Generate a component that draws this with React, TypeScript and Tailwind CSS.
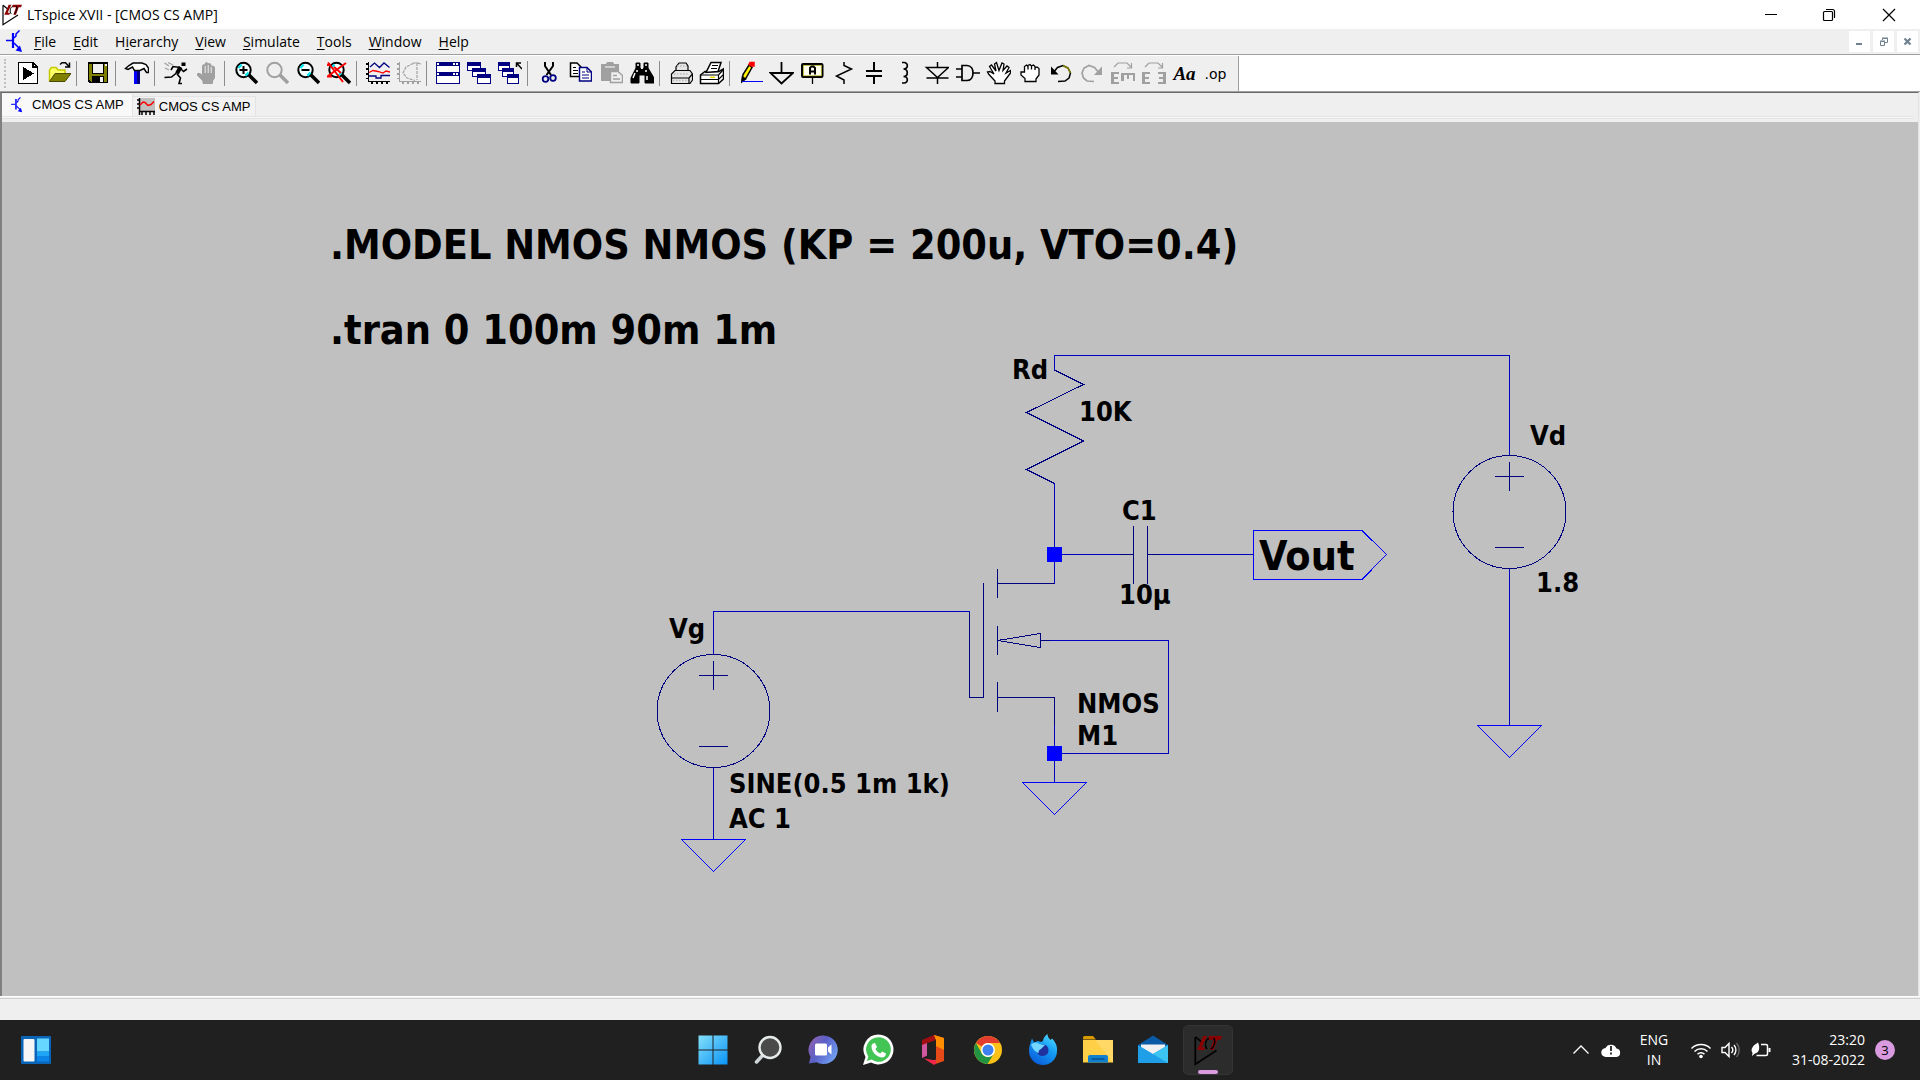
import type { ReactNode } from "react";

const INK = "#000000";
const NAVY = "#000080";
const WIRE = "#0000c0";
const FLAG = "#0000ff";
const OFF = "#a0a0a0";

function Glyph({ children, smooth }: { children: ReactNode; smooth?: boolean }) {
  return (
    <svg
      viewBox="0 0 25 25"
      className="h-[25px] w-[25px]"
      fill="none"
      stroke={INK}
      strokeWidth="1.5"
      shapeRendering={smooth ? "auto" : "crispEdges"}
      aria-hidden="true"
    >
      {children}
    </svg>
  );
}

function Lens({ color = INK, children }: { color?: string; children?: ReactNode }) {
  return (
    <Glyph smooth>
      <circle cx="10.5" cy="9" r="7.2" fill={color === INK ? "#f4ffff" : "none"} stroke={color} strokeWidth="2" />
      {color === INK && <path d="M5.5 7l3-3.4M12.5 14.6l3-3" stroke="#00e5ee" strokeWidth="2.2" />}
      <path d="M16 14l8 8" stroke={color} strokeWidth="3.6" />
      {children}
    </Glyph>
  );
}

function Win({ x, y, w = 14, h = 9 }: { x: number; y: number; w?: number; h?: number }) {
  return (
    <>
      <rect x={x} y={y} width={w} height={h} fill={NAVY} stroke="none" />
      <rect x={x + 1} y={y + 4} width={w - 2} height={h - 5} fill="#fff" stroke="none" />
    </>
  );
}

const HAND =
  "M9 22.5V20L3.500 14.5V12.5H6L8.500 14.5V4.5L9.500 3.5L11 4.5V10V2.5L12.5 1.5L14 2.5V10V3L15.5 2.5L17 3.5V10.5V6L18.500 5L20.500 6V17L18.500 20V22.5Z";

const tools: ({ name: string; icon: ReactNode } | null)[] = [
  {
    name: "Run",
    icon: (
      <Glyph>
        <path d="M3.5 1.5H18L22.5 6V22.5H3.5Z" fill="#fff" />
        <path d="M18 1.500V6H22.500" />
        <path d="M8 6L19 12.500L8 19Z" fill={INK} stroke="none" />
      </Glyph>
    ),
  },
  {
    name: "Open",
    icon: (
      <Glyph smooth>
        <path d="M3.500 20.500V9L5.500 6.500H10L12 9H19V13.500" fill="#ffff66" stroke="#c8c800" />
        <path d="M3.500 20.500L9 12.500H25L19 20.500Z" fill="#808000" stroke="#4a4a00" strokeWidth="1" />
        <path d="M14 3.500L16 1.800H19.500L23 5.500M23.500 1.500V6H19" />
      </Glyph>
    ),
  },
  null,
  {
    name: "Save",
    icon: (
      <Glyph>
        <path d="M3.500 2H22.500V21.500H5.500L3.500 19.500Z" fill="#808000" />
        <rect x="7" y="2" width="11.500" height="10" fill="#efefef" stroke={INK} strokeWidth="1" />
        <rect x="7" y="14.500" width="12" height="7" fill={INK} stroke="none" />
        <rect x="15" y="16" width="3" height="5" fill="#efefef" stroke="none" />
        <rect x="19.500" y="3" width="2" height="2" fill="#efefef" stroke="none" />
      </Glyph>
    ),
  },
  null,
  {
    name: "Control panel",
    icon: (
      <Glyph smooth>
        <rect x="10" y="9" width="6" height="14" fill="#0000ff" stroke="none" />
        <path d="M14.500 9V23" stroke={NAVY} strokeWidth="3" />
        <path d="M1.500 7.500L5 4.500L9 2H18L22 3.500L24.500 7V11.500H22.500L20 7.500L16 9.500H10.500L8.500 6L4 8.500Z" fill="#fff" />
      </Glyph>
    ),
  },
  null,
  {
    name: "Simulate",
    icon: (
      <Glyph smooth>
        <path d="M18.500 1.500H22.500V5H18.500Z" fill={INK} stroke="none" />
        <path d="M17.500 6L14 12.500" strokeWidth="4" />
        <path d="M17 6.500L10 5.500L8 9M18 8L20.500 10.500L24 8M13.500 12L8.500 16L1.500 16.500M14 13L17.500 17L16 22.500H19" strokeWidth="1.600" />
        <path d="M1.500 2L6 5M5 1.500L10 4M2 7L6 9" stroke={OFF} strokeWidth="1.300" />
      </Glyph>
    ),
  },
  {
    name: "Halt",
    icon: (
      <Glyph smooth>
        <path d={HAND} fill={OFF} stroke={OFF} strokeWidth="1" />
        <path d="M11.200 5V12M14.200 4V12M17.200 6V12" stroke="#efefef" strokeWidth="1" />
      </Glyph>
    ),
  },
  null,
  {
    name: "Zoom in",
    icon: (
      <Lens>
        <path d="M6.500 9H14.500M10.500 5V13" strokeWidth="2" />
      </Lens>
    ),
  },
  { name: "Pan", icon: <Lens color={OFF} /> },
  {
    name: "Zoom out",
    icon: (
      <Lens>
        <path d="M6.500 9H14.500" strokeWidth="2" />
      </Lens>
    ),
  },
  {
    name: "Zoom full extents",
    icon: (
      <Lens>
        <path d="M2 1.500L17 21M20 2L2 15M1 4H5M1 15.500H6M8 6L15 12" stroke="#f00" strokeWidth="2" />
      </Lens>
    ),
  },
  null,
  {
    name: "Autorange",
    icon: (
      <Glyph>
        <path d="M3.500 1V20.500H25M1 3H3M1 8H3M1 13H3M1 17.500H3M7 21V23M12 21V23M17 21V23M22 21V23" />
        <g shapeRendering="auto" strokeWidth="1.300">
          <path d="M5 6L9.500 2L14.500 6.500L19 2L24.500 6.500" stroke={NAVY} />
          <path d="M4 11.500L8 9.500L13 10.500L18 12L21 10L25 11" stroke="#f00" />
          <path d="M4 15H11V17H16V14.500H25" stroke={NAVY} />
        </g>
      </Glyph>
    ),
  },
  {
    name: "FFT",
    icon: (
      <Glyph>
        <path d="M3.500 1V20.500H25M1 3H3M1 8H3M1 13H3M1 17.500H3M7 21V23M12 21V23M17 21V23M22 21V23" stroke={OFF} />
        <path d="M25 3L21 2H18L10 6L7 12L11 17L19 19.500M21 2V19M17 2H23" stroke={OFF} strokeWidth="1.200" strokeDasharray="3 1" shapeRendering="auto" />
      </Glyph>
    ),
  },
  null,
  {
    name: "Tile windows",
    icon: (
      <Glyph>
        <rect x="1" y="1" width="24" height="22" fill={NAVY} stroke="none" />
        <rect x="2" y="5" width="22" height="6" fill="#fff" stroke="none" />
        <rect x="2" y="15" width="22" height="7" fill="#fff" stroke="none" />
        <path d="M18 3H20M21 3H23M18 13H20M21 13H23M2 3H4M2 13H4" stroke="#fff" />
      </Glyph>
    ),
  },
  {
    name: "Cascade windows",
    icon: (
      <Glyph>
        <Win x={1} y={1} />
        <Win x={6} y={7} />
        <Win x={11} y={13} h={10} />
      </Glyph>
    ),
  },
  {
    name: "Close windows",
    icon: (
      <Glyph>
        <Win x={1} y={1} w={12} />
        <Win x={5} y={7} w={12} />
        <Win x={10} y={13} w={12} h={10} />
        <path d="M19.500 6V2H24M20 2.500L25 8" shapeRendering="auto" />
      </Glyph>
    ),
  },
  null,
  {
    name: "Cut",
    icon: (
      <Glyph smooth>
        <path d="M9 1V5L15 14M17 1V5L10.500 14" strokeWidth="2" />
        <circle cx="9.500" cy="18" r="2.800" stroke={NAVY} strokeWidth="1.800" />
        <circle cx="17" cy="17" r="2.800" stroke={NAVY} strokeWidth="1.800" />
      </Glyph>
    ),
  },
  {
    name: "Copy",
    icon: (
      <Glyph smooth>
        <path d="M3.500 2H10L14 6V15.500H3.500Z" fill="#fff" />
        <path d="M6 6.500H9M6 9.500H11M6 12.500H11" strokeWidth="1" />
        <path d="M12.500 6.500H20L24.500 11V20H12.500Z" fill="#fff" stroke={NAVY} />
        <path d="M20 6.500V11H24.500M15 11H18M15 14H22M15 17H22" stroke={NAVY} strokeWidth="1" />
      </Glyph>
    ),
  },
  {
    name: "Paste",
    icon: (
      <Glyph smooth>
        <path d="M3 3H8L9 1H15L16 3H21V20H3Z" fill={OFF} stroke="none" />
        <path d="M7 6H17" stroke="#efefef" strokeWidth="1.200" />
        <path d="M12.500 10.500H20L24.500 14.500V21.500H12.500Z" fill="#efefef" stroke={OFF} />
        <path d="M15 14.500H19M15 18H22" stroke={OFF} />
      </Glyph>
    ),
  },
  {
    name: "Find",
    icon: (
      <Glyph smooth>
        <path d="M7 2H11V7L13 9L15 7V2H19V7L25 17V22H16V14H10V22H2V17L7 7Z" fill={INK} stroke={INK} strokeWidth="1" />
        <path d="M8 4H10M16 4H18M6 12L4 17M8 9V11M17 9V11M18 15V19" stroke="#fff" />
      </Glyph>
    ),
  },
  null,
  {
    name: "Print",
    icon: (
      <Glyph smooth>
        <path d="M3.500 22V13L7 9.500H8V6L11 2H18L20 5V9.500H22L24.500 13V19L22 22.500H3.500Z" fill="#e6e6e6" strokeWidth="1.200" />
        <path d="M8 9.500H21M3.500 17H21L24.500 13M21 17V22" strokeWidth="1.200" />
        <path d="M9 5H19M6 13H21M5 19.500H20" stroke="#bbb" strokeDasharray="1.500 1.500" />
      </Glyph>
    ),
  },
  {
    name: "Print setup",
    icon: (
      <Glyph smooth>
        <path d="M1.500 14L6 10.500H20L24.500 8V18L19.500 22.500H1.500Z" fill="#fff" />
        <path d="M7 11.500L12 1.500H22L19 10.500Z" fill="#fff" />
        <path d="M13 4.500H19M12 7.500H18M1.500 14H19.500L24 9M19.500 14V22.500M1.500 18.500H19.500L24 14" strokeWidth="1.200" />
        <path d="M11 16.300H16" stroke="#e8d800" />
      </Glyph>
    ),
  },
  null,
  {
    name: "Wire",
    icon: (
      <Glyph smooth>
        <path d="M4 20.500L5 13.500L11 4L14 6.500L8 17Z" fill="#ffef00" strokeWidth="1.500" />
        <path d="M4 20.500L4.500 16L7.500 18Z" fill={INK} />
        <path d="M12 1.500H16V5H13.500L11 3.500Z" fill="#f00" stroke="#f00" />
        <path d="M4 20.500H25" stroke="#0000ff" strokeWidth="1" />
      </Glyph>
    ),
  },
  {
    name: "Ground",
    icon: (
      <Glyph smooth>
        <path d="M12.500 1V12M1.500 12H24L12.500 22.500Z" strokeWidth="1.800" />
      </Glyph>
    ),
  },
  {
    name: "Label net",
    icon: (
      <Glyph smooth>
        <rect x="2" y="3" width="20.500" height="13" rx="1" strokeWidth="2" />
        <rect x="3.300" y="4.300" width="18" height="10.500" fill="#fffff0" stroke="#a0a000" strokeWidth="0.700" />
        <path d="M10 13.500V7L11.500 5.500H13.500L15 7V13.500M10 10.500H15" strokeWidth="2" />
        <path d="M12.500 17V23" strokeWidth="1.300" />
      </Glyph>
    ),
  },
  {
    name: "Resistor",
    icon: (
      <Glyph smooth>
        <path d="M13 1V4.500L20.500 8L5.500 15L13 19V23" />
      </Glyph>
    ),
  },
  {
    name: "Capacitor",
    icon: (
      <Glyph>
        <path d="M12 1V10M12 15V23" strokeWidth="2" />
        <path d="M4 10H20M4 15H20" strokeWidth="2" />
      </Glyph>
    ),
  },
  {
    name: "Inductor",
    icon: (
      <Glyph smooth>
        <path d="M9 1.500H11C15.500 1.500 15.500 8 10.500 8C15.500 8 15.500 15.500 10.500 15.500C15.500 15.500 15.500 22 11 22H9" strokeWidth="1.700" />
      </Glyph>
    ),
  },
  {
    name: "Diode",
    icon: (
      <Glyph smooth>
        <path d="M13.500 1V7M13.500 16.500V23M2.500 6.500H24.500L13.500 16.500ZM2.500 17H24.500" />
      </Glyph>
    ),
  },
  {
    name: "Component",
    icon: (
      <Glyph smooth>
        <path d="M7 4.500H12C20 4.500 20 19.500 12 19.500H7ZM1 8H7M1 16H7M18 12H25" strokeWidth="1.700" />
      </Glyph>
    ),
  },
  {
    name: "Move",
    icon: (
      <Glyph smooth>
        <path
          d="M9 22.500V20L3 13.500L1.500 11L4 10.500L8 13L3.500 5.500L5.500 4L10 10L8.500 3L10.500 1.500L13 9.500L16 2L18 3L17 9.500L21 5L23 6.500L20 12L24.500 9.500V12L18.500 20V22.500Z"
          fill="#fff"
          strokeWidth="1.300"
        />
      </Glyph>
    ),
  },
  {
    name: "Drag",
    icon: (
      <Glyph smooth>
        <path
          d="M8 20.500V17.500L4 14V11H7.500V5.500L9.500 4L11 5.500V8.500V4.500L13 3.500L14.500 5V8.500V5L16.500 4L18 5.500V9V7L20 6L22 7.500V14L19 18V20.500Z"
          fill="#fff"
          strokeWidth="1.300"
        />
      </Glyph>
    ),
  },
  {
    name: "Undo",
    icon: (
      <Glyph smooth>
        <path d="M4.500 12.500L9.500 6.500L15 4.500L20 7L22.500 12L21 17L17 20L10 20.500" strokeWidth="1.500" />
        <path d="M15 4.500L20 7L22.500 12" stroke="#808000" strokeWidth="1.500" />
        <path d="M3 5.500V13.500H10.500Z" fill={INK} stroke="none" />
      </Glyph>
    ),
  },
  {
    name: "Redo",
    icon: (
      <Glyph smooth>
        <path d="M20.500 12.500L15.500 6.500L10 4.500L5 7L3 12L4.500 17L8 20L15 20.500" stroke={OFF} strokeWidth="1.700" />
        <path d="M23 5.500V14H15Z" fill={OFF} stroke="none" />
      </Glyph>
    ),
  },
  {
    name: "Rotate",
    icon: (
      <Glyph>
        <path d="M4 6L8 2H17L21 6M21.500 2V7H17" stroke={OFF} strokeWidth="1.200" shapeRendering="auto" />
        <path d="M2.500 11V22.500M2 12H9M2 17H8M2 22H9M11 13H25M12.500 13V20M18 13V18M24 13V20" stroke={OFF} strokeWidth="2.400" />
      </Glyph>
    ),
  },
  {
    name: "Mirror",
    icon: (
      <Glyph>
        <path d="M4 6L8 2H17L21 6M21.500 2V7H17" stroke={OFF} strokeWidth="1.200" shapeRendering="auto" />
        <path d="M2.500 11V22.500M2 12H9M2 17H8M2 22H9M23.500 11V22.500M24 12H17M24 17H18M24 22H17" stroke={OFF} strokeWidth="2.400" />
      </Glyph>
    ),
  },
  { name: "Text", icon: <span className="font-['Liberation_Serif',serif] text-[19px] leading-6 font-bold italic">Aa</span> },
  { name: "SPICE directive", icon: <span className="font-['DejaVu_Sans',sans-serif] text-[14px] leading-6">.op</span> },
];

const menus: [string, string, string][] = [
  ["", "F", "ile"],
  ["", "E", "dit"],
  ["H", "i", "erarchy"],
  ["", "V", "iew"],
  ["", "S", "imulate"],
  ["", "T", "ools"],
  ["", "W", "indow"],
  ["", "H", "elp"],
];

const labels: [string, number, number][] = [
  ["Rd", 1012, 379],
  ["10K", 1079, 421],
  ["C1", 1122, 520],
  ["10µ", 1119, 604],
  ["Vd", 1530, 445],
  ["1.8", 1536, 592],
  ["NMOS", 1077, 713],
  ["M1", 1077, 745],
  ["Vg", 669, 638],
  ["SINE(0.5 1m 1k)", 729, 793],
  ["AC 1", 729, 828],
];

function Logo({ className }: { className: string }) {
  return (
    <svg viewBox="0 0 30 33" className={className} aria-hidden="true">
      <path d="M1.500 2V31L24 16.500" fill="none" stroke={INK} strokeWidth="1.800" />
      <path d="M1.500 2L9 8" fill="none" stroke={INK} strokeWidth="1.800" />
      <path d="M10 1H14L8.500 13H12L11 16H3.500ZM16 1H30L28.500 5H25L21 16H17L21 5H15Z" fill="#8b0000" />
      <path d="M16 3.500C12 5 11 12 14 15M21 3C24 7 21 13 18 15" fill="none" stroke={INK} strokeWidth="1.500" />
    </svg>
  );
}

function Transistor({ className }: { className: string }) {
  return (
    <svg viewBox="0 0 17 23" className={className} fill="none" stroke="#0000ff" aria-hidden="true">
      <path d="M0 10.500H6" strokeWidth="1.500" />
      <path d="M7 3V18" strokeWidth="2.200" />
      <path d="M8 8L10 6V4L13.500 0.500M8 13L13 18" strokeWidth="1.500" />
      <path d="M16 22L9.500 20.500L14 15.500Z" fill="#0000ff" stroke="none" />
    </svg>
  );
}

function Source({ cx, cy }: { cx: number; cy: number }) {
  return (
    <g stroke={NAVY}>
      <circle cx={cx} cy={cy} r="56.500" />
      <path d={`M${cx - 15} ${cy - 35.500}h29M${cx} ${cy - 50}v29M${cx - 15} ${cy + 35.500}h29`} />
    </g>
  );
}

function Schematic() {
  return (
    <svg viewBox="2 122 1916 874" className="block h-full w-full" fill="none" strokeWidth="1" shapeRendering="crispEdges" role="img" aria-label="CMOS CS AMP schematic">
      <g stroke={WIRE}>
        <path d="M1054.500 370V355.500H1509.500V455M1509.500 568V725M1054.500 483V583M1062 554.500H1120M1160 554.500H1253" />
        <path d="M713.500 654V611.500H969.500M1050 640.500H1168.500V753.500H1054.500M1054.500 725V782M713.500 767V839" />
      </g>
      <g stroke={NAVY}>
        <path d="M1054.500 370L1083.500 384.500L1026.500 412.500L1083.500 441L1026.500 469.500L1054.500 483.500" />
        <path d="M1120 554.500H1133.500M1133.500 526V584M1147.500 526V584M1147.500 554.500H1160" />
        <path d="M1054.500 583.500H997.500M997.500 569V598M997.500 626V655M997.500 682V712M997.500 697.500H1054.500V725" />
        <path d="M983.500 583V697.500H969.500V611.500M997.500 640.500L1040.500 633.500V647.500ZM1040.500 640.500H1050" />
      </g>
      <g stroke={FLAG}>
        <path d="M1253.500 530.500H1362L1386.500 554.500L1362 579.500H1253.500Z" />
        <path d="M1022.500 782.500H1086.500L1054.500 814.500ZM1477.500 725.500H1541.500L1509.500 757.500ZM681.500 839.500H745.500L713.500 871.500Z" />
      </g>
      <Source cx={1509.5} cy={512} />
      <Source cx={713.5} cy={711} />
      <path d="M1047 547h15v15h-15zM1047 746h15v15h-15z" fill={FLAG} />
      <g fill={INK} className="font-['DejaVu_Sans_Condensed','Noto_Sans',sans-serif] font-bold">
        <g className="text-[41px]">
          <text x="330" y="259">.MODEL NMOS NMOS (KP = 200u, VTO=0.4)</text>
          <text x="330" y="344">.tran 0 100m 90m 1m</text>
          <text x="1259" y="570">Vout</text>
        </g>
        <g className="text-[27px]">
          {labels.map(([text, x, y]) => (
            <text key={text} x={x} y={y}>
              {text}
            </text>
          ))}
        </g>
      </g>
    </svg>
  );
}

const taskIcons: { name: string; art: ReactNode }[] = [
  {
    name: "Start",
    art: (
      <>
        <linearGradient id="win" x1="0" y1="0" x2="1" y2="1">
          <stop stopColor="#84e0fb" />
          <stop offset="1" stopColor="#0a93f5" />
        </linearGradient>
        <path d="M1.500 1.500h14v14h-14zM16.500 1.500h14v14h-14zM1.500 16.500h14v14h-14zM16.500 16.500h14v14h-14z" fill="url(#win)" />
      </>
    ),
  },
  {
    name: "Search",
    art: (
      <>
        <path d="M11 21L4.500 28" stroke="#cfd6d8" strokeWidth="3.500" strokeLinecap="round" />
        <circle cx="18" cy="13.500" r="10.500" fill="#4a4a4a" stroke="#e6eaeb" strokeWidth="2.400" />
      </>
    ),
  },
  {
    name: "Chat",
    art: (
      <>
        <linearGradient id="chat" x1="0" y1="0" x2="1" y2="0.600">
          <stop stopColor="#9a63a8" />
          <stop offset="0.500" stopColor="#5b5fc7" />
          <stop offset="1" stopColor="#6f9df0" />
        </linearGradient>
        <path d="M16.500 1.500a14.300 14.300 0 1 1-7 26.800L2 29.500l1.500-6.500A14.300 14.300 0 0 1 16.500 1.500z" fill="url(#chat)" />
        <rect x="8" y="9.500" width="12" height="12" rx="1.500" fill="#fff" />
        <path d="M21 13.500l3.500-3v10l-3.500-3z" fill="#fff" />
      </>
    ),
  },
  {
    name: "WhatsApp",
    art: (
      <>
        <path d="M16.500 0.500a15 15 0 1 1-7.500 28L1 31l2.500-8A15 15 0 0 1 16.500 0.500z" fill="#fff" />
        <path d="M16.500 3.200a12.300 12.300 0 1 1-7 22.400L5 27l1.300-4.500A12.300 12.300 0 0 1 16.500 3.200z" fill="#43c555" />
        <path d="M11 9.500l2-0.500 2 4-1.500 2c1 2.200 2.500 3.500 4.800 4.600l1.800-2.100 3.900 2c0 2.500-2 4-4 4C14 23 9.500 17.500 9.500 12.500c0-1.300 0.600-2.400 1.500-3z" fill="#fff" />
      </>
    ),
  },
  {
    name: "Office",
    art: (
      <>
        <path d="M17 1L5 6v18l5-2.500V9l8-2.500V1z" fill="#a30e12" />
        <path d="M5 11v13l5-2.500V9z" fill="#d057a0" />
        <path d="M17 1l10 3v23l-10 3.500-1-4 3-1V6z" fill="#e64a19" />
        <path d="M17 1l10 3v12l-8-4V6z" fill="#ff8f00" />
        <path d="M7 24.500l12 2v3.500l-2.500 0.800z" fill="#f0274b" />
      </>
    ),
  },
  {
    name: "Chrome",
    art: (
      <>
        <circle cx="16" cy="16" r="14" fill="#fbc116" />
        <path d="M3.900 9A14 14 0 0 1 28.100 9H16a7 7 0 0 0-6 3.500z" fill="#e33b2e" />
        <path d="M3.900 9A14 14 0 0 0 15.500 30l6.500-10.500a7 7 0 0 1-12.100 0z" fill="#229342" />
        <circle cx="16" cy="16" r="7" fill="#fff" />
        <circle cx="16" cy="16" r="5.500" fill="#3d80ee" />
      </>
    ),
  },
  {
    name: "Browser",
    art: (
      <>
        <linearGradient id="fox" x1="1" y1="0" x2="0.400" y2="1">
          <stop stopColor="#5de8ff" />
          <stop offset="0.500" stopColor="#159df4" />
          <stop offset="1" stopColor="#0b62dc" />
        </linearGradient>
        <path d="M5 4.500l2 4 4-1.500 3 1 2-1c0-3 2-5 4.500-7 0 3 1.500 4 3 6l1.500-1.500C28.500 8 30.500 12 30 17a14 14 0 0 1-28 0C2 12 3.500 9 5 4.500z" fill="url(#fox)" />
        <path d="M12 12c6-4 11 1 9 7-2.500 4-9 4-10.500 0z" fill="#20309c" />
        <path d="M4 11c3-3 6-3 8-1l6 1-4 4c-2 1-3 2-2 4-4-1-6-4-8-8z" fill="#72d6ff" />
      </>
    ),
  },
  {
    name: "File Explorer",
    art: (
      <>
        <path d="M1 3.500C1 2.500 2 2 3 2h8l3 3.500H1z" fill="#d99a00" />
        <path d="M1 6h30v22.500H1z" fill="#ffcf48" />
        <path d="M13 6L31 28.500V6z" fill="#ffd866" />
        <path d="M6 28.500V23a2 2 0 0 1 2-2h16a2 2 0 0 1 2 2v5.500z" fill="#0f7fd0" />
        <path d="M9.500 25h13" stroke="#064f90" strokeWidth="1.500" />
      </>
    ),
  },
  {
    name: "Mail",
    art: (
      <>
        <path d="M1 11L16 1.500 31 11 24 20H6z" fill="#0a5aa5" />
        <path d="M4 10.500h24V16l-12 6L4 16z" fill="#f1f1f1" />
        <path d="M1 11v18h30V11L16 20z" fill="#1f9fe8" />
        <path d="M16 20L31 11v18z" fill="#3cc3f2" />
      </>
    ),
  },
];

export default function App() {
  return (
    <div className="flex h-screen flex-col overflow-hidden bg-[#efefef] font-['Open_Sans','Noto_Sans',sans-serif] text-black">
      <header className="flex h-[29px] shrink-0 items-center bg-white">
        <Logo className="ml-[2px] h-[22px] w-5" />
        <h1 className="ml-[5px] text-[14px] leading-5">LTspice XVII - [CMOS CS AMP]</h1>
        <div className="ml-auto flex">
          <button aria-label="Minimize" className="grid h-[29px] w-[58px] place-items-center">
            <svg viewBox="0 0 14 14" className="h-3.5 w-3.5" stroke="#000" shapeRendering="crispEdges">
              <path d="M1 6.500H13" />
            </svg>
          </button>
          <button aria-label="Restore" className="grid h-[29px] w-[58px] place-items-center">
            <svg viewBox="0 0 14 14" className="h-3.5 w-3.5" fill="none" stroke="#000" strokeWidth="1.200">
              <rect x="1.500" y="3.500" width="9" height="9" rx="1" />
              <path d="M4 1.500H10.500Q12.500 1.500 12.500 3.500V10" />
            </svg>
          </button>
          <button aria-label="Close" className="grid h-[29px] w-[62px] place-items-center">
            <svg viewBox="0 0 14 14" className="h-3.5 w-3.5" stroke="#000" strokeWidth="1.200">
              <path d="M1 1L13 13M13 1L1 13" />
            </svg>
          </button>
        </div>
      </header>

      <nav className="flex h-[25px] shrink-0 items-center">
        <Transistor className="ml-1.5 h-[23px] w-[17px]" />
        <div className="ml-[3px] flex gap-px">
          {menus.map(([a, u, b]) => (
            <button key={a + u + b} className="px-2 text-[14px] leading-6">
              {a}
              <span className="underline underline-offset-2">{u}</span>
              {b}
            </button>
          ))}
        </div>
        <div className="mr-0.5 ml-auto flex gap-[3px]">
          <button aria-label="Minimize document" className="grid h-[21px] w-[21px] place-items-center bg-white">
            <svg viewBox="0 0 9 9" className="h-[9px] w-[9px]" stroke="#708090" strokeWidth="2">
              <path d="M1 7H7" />
            </svg>
          </button>
          <button aria-label="Restore document" className="grid h-[21px] w-[21px] place-items-center bg-white">
            <svg viewBox="0 0 9 9" className="h-[9px] w-[9px]" fill="none" stroke="#708090">
              <path d="M3.500 3V1.500H8.500V5.500H6M3 1H9M1 4H6M1.500 4.500V8.500H5.500V4.500Z" />
            </svg>
          </button>
          <button aria-label="Close document" className="grid h-[21px] w-[21px] place-items-center bg-white">
            <svg viewBox="0 0 9 9" className="h-[9px] w-[9px]" stroke="#708090" strokeWidth="2.200">
              <path d="M1.500 1.500L7.500 7.500M7.500 1.500L1.500 7.500" />
            </svg>
          </button>
        </div>
      </nav>

      <div className="flex h-[38px] shrink-0 border-t border-b border-[#a0a0a0] bg-white pt-px">
        <div className="flex items-center border-r border-[#a0a0a0] bg-[#efefef] pr-[7px]">
          <span className="mr-1.5 ml-1 h-[29px] border-l-2 border-dotted border-[#c0c0c0]" />
          {tools.map((tool, i) =>
            tool ? (
              <button key={tool.name} aria-label={tool.name} className="grid h-[35px] w-[31px] place-items-center">
                {tool.icon}
              </button>
            ) : (
              <span key={i} className="mr-[5px] ml-0.5 h-[25px] w-px bg-[#8c8c8c]" />
            ),
          )}
        </div>
      </div>

      <main className="mr-px flex min-h-0 flex-1 flex-col border-t border-r border-l-2 border-t-[#696969] border-r-[#e3e3e3] border-l-[#808080]">
        <div role="tablist" className="flex h-[29px] shrink-0 flex-col">
          <div className="flex h-[23px] items-end pt-px">
            <button
              role="tab"
              aria-selected="true"
              className="flex h-full items-center border-r border-[#e3e3e3] bg-[#f9f9f9] pr-2 pl-2 font-['Liberation_Sans',sans-serif] text-[13px]"
            >
              <Transistor className="mr-2 h-4 w-3.5" />
              CMOS CS AMP
            </button>
            <button
              role="tab"
              aria-selected="false"
              className="flex h-5 items-center border-t border-r border-[#e3e3e3] bg-[#f2f2f2] pr-1 pl-1 font-['Liberation_Sans',sans-serif] text-[13px]"
            >
              <svg viewBox="0 0 18 17" className="mr-1 h-[17px] w-[18px]" fill="none" stroke="#000" aria-hidden="true">
                <rect x="2" y="0" width="16" height="14" fill="#c0c0c0" stroke="none" />
                <path d="M2.500 0V17M0 2H2M0 6H2M0 10H2M2 13.500H18M5 14V17M9 14V17M13 14V17M17 14V17" strokeWidth="1.500" />
                <path d="M3 7L6 4L8 4.500L11 7.500L14 6.500L17 3.500" stroke="#f00" strokeWidth="1.500" />
              </svg>
              CMOS CS AMP
            </button>
          </div>
          <div className="mr-1 h-[3px] border-y border-[#e3e3e3] bg-[#f9f9f9]" />
        </div>
        <div className="min-h-0 flex-1 bg-[#c0c0c0]">
          <Schematic />
        </div>
      </main>
      <div className="h-6 shrink-0 border-t border-white">
        <div className="mt-px h-px bg-[#d0d0d0]" />
      </div>

      <footer className="grid h-[60px] shrink-0 grid-cols-[1fr_auto_1fr] items-center bg-[#202020] text-white">
        <button aria-label="Widgets" className="ml-[21px] w-[30px]">
          <svg viewBox="0 0 30 28" className="h-7 w-[30px]">
            <rect width="30" height="28" rx="1" fill="#0a64b8" />
            <rect x="2.500" y="3" width="11" height="22.500" rx="1" fill="#f6f6f6" />
            <rect x="16" y="2.500" width="12" height="13" fill="#66d8ff" />
            <rect x="16" y="15.500" width="12" height="5" fill="#1fa5f5" />
            <rect x="16" y="20.500" width="12" height="5" fill="#0a84e8" />
          </svg>
        </button>
        <div className="flex">
          {taskIcons.map((t) => (
            <button key={t.name} aria-label={t.name} className="grid h-[60px] w-[55px] place-items-center">
              <svg viewBox="0 0 32 32" className="h-8 w-8" fill="none">
                {t.art}
              </svg>
            </button>
          ))}
          <button aria-label="LTspice" className="my-[5px] flex h-[50px] w-[55px] justify-center">
            <span className="flex h-[50px] w-[50px] flex-col items-center rounded-[5px] border border-[#343434] bg-[#2c2c2c]">
              <Logo className="mt-[9px] h-[31px] w-[30px]" />
              <span className="mt-1 h-1 w-5 rounded-full bg-[#d99ae0]" />
            </span>
          </button>
        </div>
        <div className="flex items-center justify-self-end pr-[25px] text-[14px] leading-5">
          <button aria-label="Show hidden icons">
            <svg viewBox="0 0 18 18" className="h-[18px] w-[18px]" fill="none" stroke="#fff" strokeWidth="1.300">
              <path d="M1.500 12.500L9 5L16.500 12.500" />
            </svg>
          </button>
          <button aria-label="OneDrive" className="ml-[11px]">
            <svg viewBox="0 0 20 16" className="h-4 w-5">
              <path d="M5 15a4.500 4.500 0 0 1-0.500-9A6 6 0 0 1 15.500 6.500 4.300 4.300 0 0 1 15.500 15z" fill="#fff" />
              <path d="M10 4V9M10 10.500V12.500" stroke="#202020" strokeWidth="1.800" />
            </svg>
          </button>
          <button className="ml-[18px] w-[30px] text-center leading-5">
            ENG
            <br />
            IN
          </button>
          <button aria-label="Network, volume and battery" className="ml-[21px] flex items-center gap-[9px]">
            <svg viewBox="0 0 22 18" className="h-[18px] w-[22px]" fill="none" stroke="#fff" strokeWidth="1.500">
              <path d="M1.500 7.500a13.500 13.500 0 0 1 19 0M4.500 10.500a9.300 9.300 0 0 1 13 0M7.500 13.300a5 5 0 0 1 7 0" />
              <circle cx="11" cy="15.500" r="1.800" fill="#fff" stroke="none" />
            </svg>
            <svg viewBox="0 0 20 18" className="h-[18px] w-5" fill="none" stroke="#fff" strokeWidth="1.400">
              <path d="M1 6.500H4L8 2.500V15.500L4 11.500H1Z" />
              <path d="M10.500 6a4.500 4.500 0 0 1 0 6M13 4a7.500 7.500 0 0 1 0 10" />
              <path d="M15.500 2a10.500 10.500 0 0 1 0 14" stroke="#666" />
            </svg>
            <svg viewBox="0 0 21 18" className="h-[18px] w-[21px]" fill="none" stroke="#fff" strokeWidth="1.500">
              <path d="M11 3.500H16Q17.500 3.500 17.500 5V13Q17.500 14.500 16 14.500H6.500" />
              <path d="M19.500 7V11" strokeWidth="2" />
              <path d="M8 1.500C10.500 7 9 12 5 12.500L2 15L2.500 12C0 8 3 4.500 8 1.500Z" fill="#fff" stroke="none" />
            </svg>
          </button>
          <button className="ml-[19px] w-[75px] text-right whitespace-nowrap">
            23:20
            <br />
            31-08-2022
          </button>
          <button aria-label="3 notifications" className="ml-2.5 h-5 w-5 rounded-full bg-[#d99ae0] text-center text-[13px] leading-5 text-black">
            3
          </button>
        </div>
      </footer>
    </div>
  );
}
